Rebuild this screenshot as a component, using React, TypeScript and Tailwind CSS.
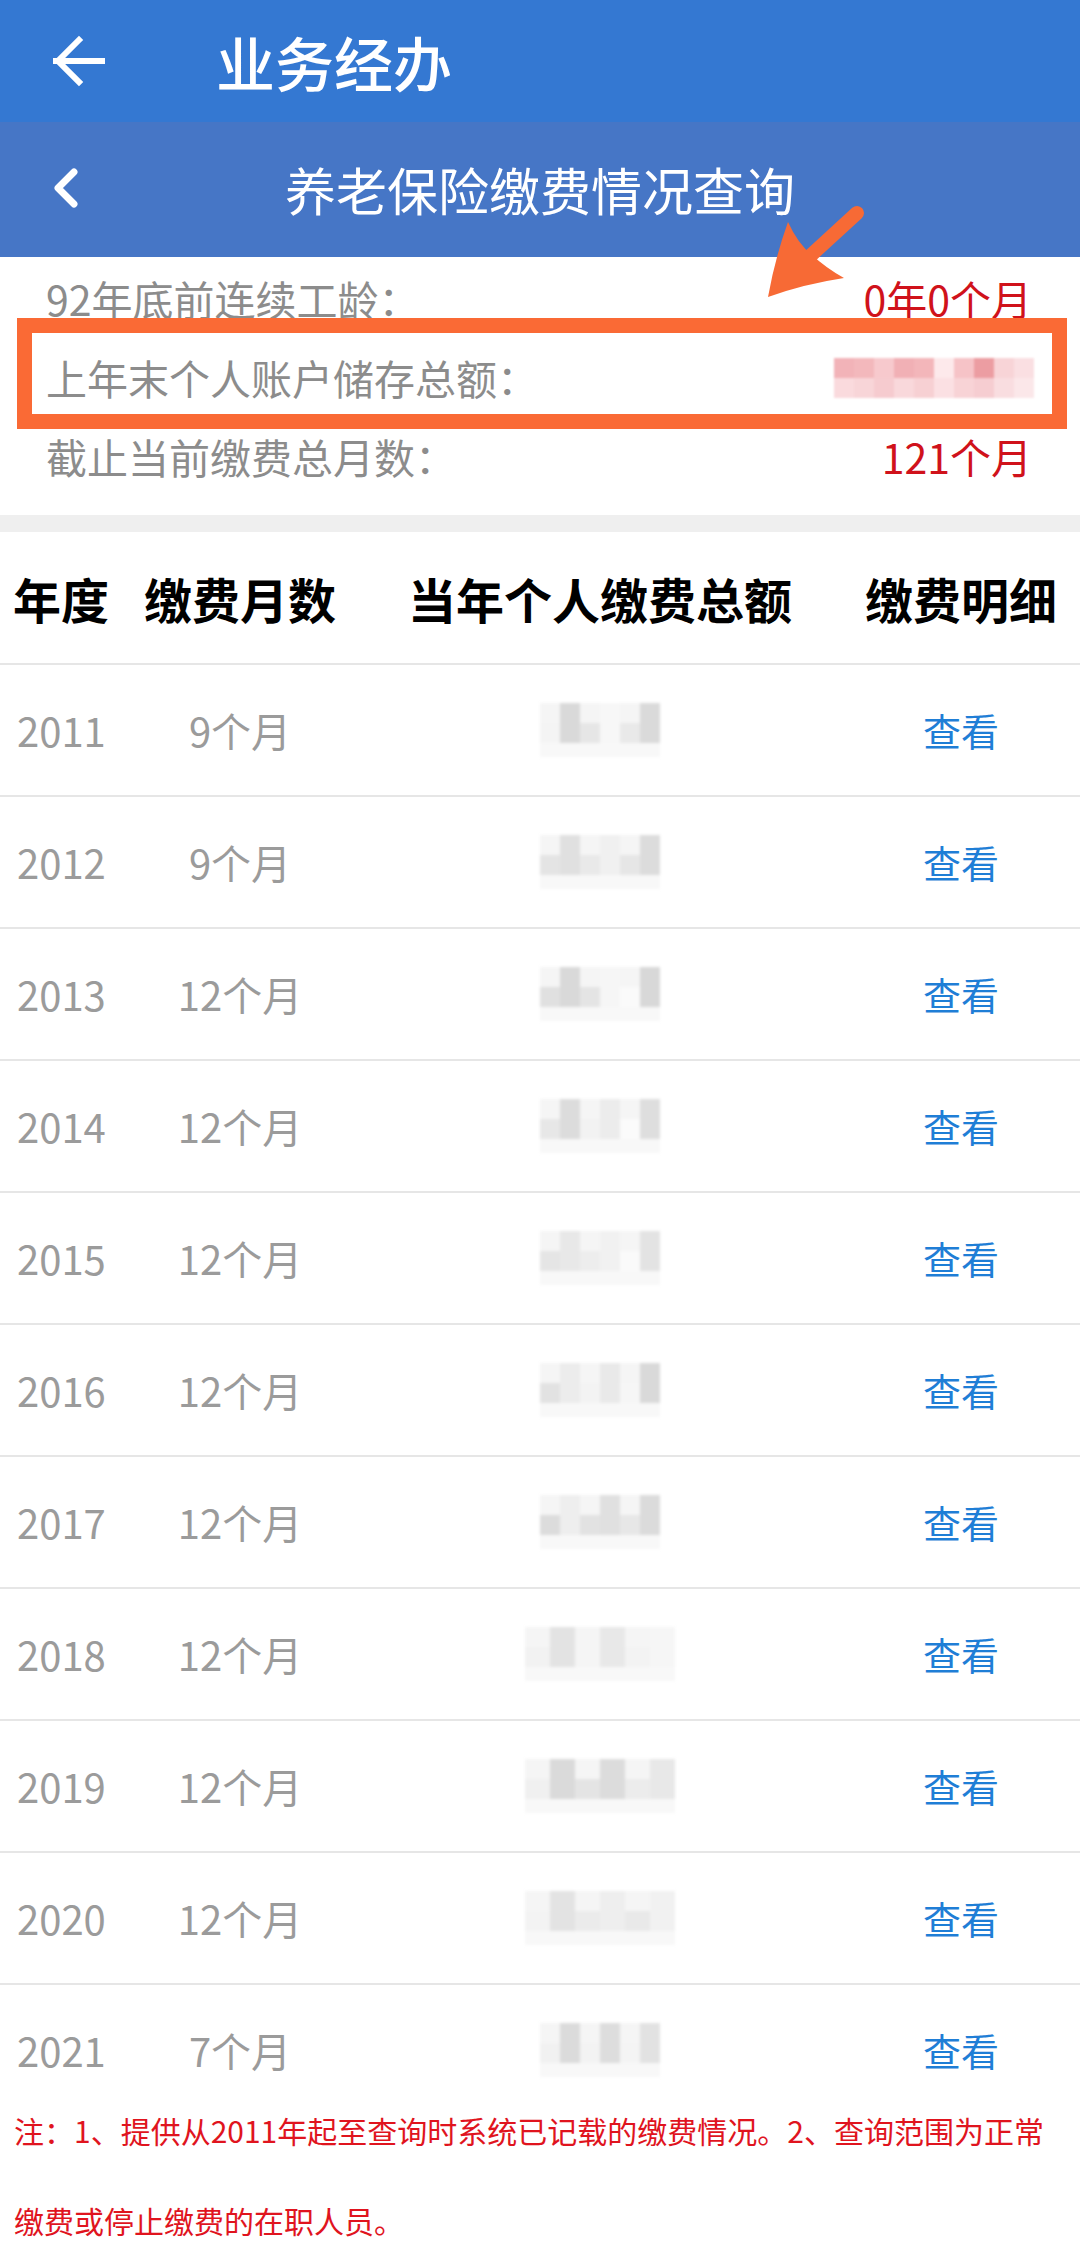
import { ChevronLeft } from "lucide-react";

const FONT = "font-['Noto_Sans_CJK_SC','Noto_Sans',sans-serif]";

// grey mosaic shades for the masked amounts
const rows = [
  { year: "2011", months: "9个月", w: 120, shades: ["#f4f4f4", "#d9d9d9", "#e6e6e6", "#f7f7f7", "#e9e9e9", "#dadada"] },
  { year: "2012", months: "9个月", w: 120, shades: ["#e4e4e4", "#e0e0e0", "#e9e9e9", "#f0f0f0", "#e6e6e6", "#dcdcdc"] },
  { year: "2013", months: "12个月", w: 120, shades: ["#e0e0e0", "#d9d9d9", "#e4e4e4", "#f6f6f6", "#fafafa", "#d8d8d8"] },
  { year: "2014", months: "12个月", w: 120, shades: ["#e7e7e7", "#dcdcdc", "#f2f2f2", "#ececec", "#fbfbfb", "#dedede"] },
  { year: "2015", months: "12个月", w: 120, shades: ["#e5e5e5", "#e8e8e8", "#ededed", "#f1f1f1", "#fafafa", "#e3e3e3"] },
  { year: "2016", months: "12个月", w: 120, shades: ["#e2e2e2", "#ececec", "#f3f3f3", "#e9e9e9", "#f6f6f6", "#d9d9d9"] },
  { year: "2017", months: "12个月", w: 120, shades: ["#dcdcdc", "#eeeeee", "#e2e2e2", "#e0e0e0", "#e7e7e7", "#dbdbdb"] },
  { year: "2018", months: "12个月", w: 150, shades: ["#f2f2f2", "#e3e3e3", "#f5f5f5", "#e8e8e8", "#f3f3f3", "#f6f6f6"] },
  { year: "2019", months: "12个月", w: 150, shades: ["#f0f0f0", "#dadada", "#e4e4e4", "#dcdcdc", "#ececec", "#e8e8e8"] },
  { year: "2020", months: "12个月", w: 150, shades: ["#f3f3f3", "#e3e3e3", "#ebebeb", "#eeeeee", "#e9e9e9", "#f1f1f1"] },
  { year: "2021", months: "7个月", w: 120, shades: ["#f1f1f1", "#dbdbdb", "#f3f3f3", "#dddddd", "#f4f4f4", "#e2e2e2"] },
];

const pink = ["#f2b3b8", "#f3b8bc", "#f7c9cd", "#f1b0b5", "#f3b6ba", "#fde9eb", "#f6c3c7", "#ec9da2", "#f8d4d7", "#fadfe2"];
const pinkLow = ["#fadadd", "#f8d5d8", "#f6cbcf", "#f9d8db", "#f7d0d3", "#fbe0e3", "#f8d3d6", "#f6cdd1", "#f9dde0", "#fbe7e9"];

function Mosaic({ shades, w }: { shades: string[]; w: number }) {
  return (
    <div className="flex flex-col blur-[1.5px]" style={{ width: w }}>
      <div className="flex h-[20px]">
        {shades.map((c, i) => (
          <div key={i} className="h-full flex-1" style={{ backgroundColor: i % 2 ? c : "#f5f5f5" }} />
        ))}
      </div>
      <div className="flex h-[20px]">
        {shades.map((c, i) => (
          <div key={i} className="h-full flex-1" style={{ backgroundColor: c }} />
        ))}
      </div>
      <div className="h-[14px] bg-[#f8f8f8]" />
    </div>
  );
}

export default function App() {
  return (
    <div className={`relative h-[2261px] w-[1080px] overflow-hidden bg-white ${FONT}`}>
      {/* app bar */}
      <div className="flex h-[122px] items-center bg-[#3478d2]">
        <svg width="60" height="60" viewBox="0 0 60 60" className="ml-[48px]" fill="none" stroke="white" strokeWidth="6" strokeLinecap="square">
          <path d="M8 30 H54" />
          <path d="M31 9 L10 30 L31 51" />
        </svg>
        <span className="ml-[108px] text-[59px] font-medium leading-none text-white">业务经办</span>
      </div>

      {/* page title */}
      <div className="relative flex h-[135px] items-center justify-center bg-[#4676c6]">
        <ChevronLeft size={64} strokeWidth={2.6} className="absolute left-[34px] top-[34px] text-white" />
        <span className="text-[51px] leading-none text-white">养老保险缴费情况查询</span>
      </div>

      {/* summary */}
      <div className="relative px-[46px] pb-[19px] pt-[2px] text-[41px]">
        <div className="flex h-[79px] items-center justify-between">
          <span className="text-[#8c8c8c]">92年底前连续工龄：</span>
          <span className="pr-[2px] text-[#d0121b]">0年0个月</span>
        </div>
        <div className="flex h-[79px] items-center justify-between">
          <span className="text-[#8c8c8c]">上年末个人账户储存总额：</span>
          <div className="flex w-[200px] flex-col blur-[1px]">
            <div className="flex h-[20px]">
              {pink.map((c, i) => (
                <div key={i} className="flex-1" style={{ backgroundColor: c }} />
              ))}
            </div>
            <div className="flex h-[20px]">
              {pinkLow.map((c, i) => (
                <div key={i} className="flex-1" style={{ backgroundColor: c }} />
              ))}
            </div>
          </div>
        </div>
        <div className="flex h-[79px] items-center justify-between">
          <span className="text-[#8c8c8c]">截止当前缴费总月数：</span>
          <span className="pr-[2px] text-[#d0121b]">121个月</span>
        </div>

        {/* highlight box */}
        <div className="absolute left-[17px] top-[61px] h-[111px] w-[1050px] border-[15px] border-[#fa6a35]" />
      </div>

      <div className="h-[17px] bg-[#efefef]" />

      {/* table */}
      <div className="grid h-[133px] grid-cols-[130px_220px_500px_222px] items-center border-b-2 border-[#e6e6e6] text-[48px] font-bold leading-none text-black">
        <span className="pl-[13px]">年度</span>
        <span className="text-center">缴费月数</span>
        <span className="text-center">当年个人缴费总额</span>
        <span className="text-center">缴费明细</span>
      </div>

      {rows.map((r, i) => (
        <div
          key={r.year}
          className={
            i === rows.length - 1
              ? "grid h-[100px] grid-cols-[130px_220px_500px_222px] items-center pt-[30px] text-[40px] leading-none"
              : "grid h-[132px] grid-cols-[130px_220px_500px_222px] items-center border-b-2 border-[#e6e6e6] text-[40px] leading-none"
          }
        >
          <span className="pl-[17px] text-[#9b9b9b]">{r.year}</span>
          <span className="text-center text-[#9b9b9b]">{r.months}</span>
          <div className="flex justify-center">
            <Mosaic shades={r.shades} w={r.w} />
          </div>
          <span className="text-center text-[38px] text-[#1f7ed6]">查看</span>
        </div>
      ))}

      <p className="px-[14px] text-[30px] leading-[90px] text-[#e0141e]">
        注：1、提供从2011年起至查询时系统已记载的缴费情况。2、查询范围为正常缴费或停止缴费的在职人员。
      </p>

      {/* annotation arrow */}
      <svg width="110" height="105" viewBox="0 0 110 105" className="absolute left-[760px] top-[200px]">
        <path d="M97 13 L48 58" stroke="#f76a35" strokeWidth="14" strokeLinecap="round" />
        <path d="M8 97 Q15 58 28 22 Q38 44 52 55 Q66 68 84 78 Q44 84 8 97 Z" fill="#f76a35" />
      </svg>
    </div>
  );
}
